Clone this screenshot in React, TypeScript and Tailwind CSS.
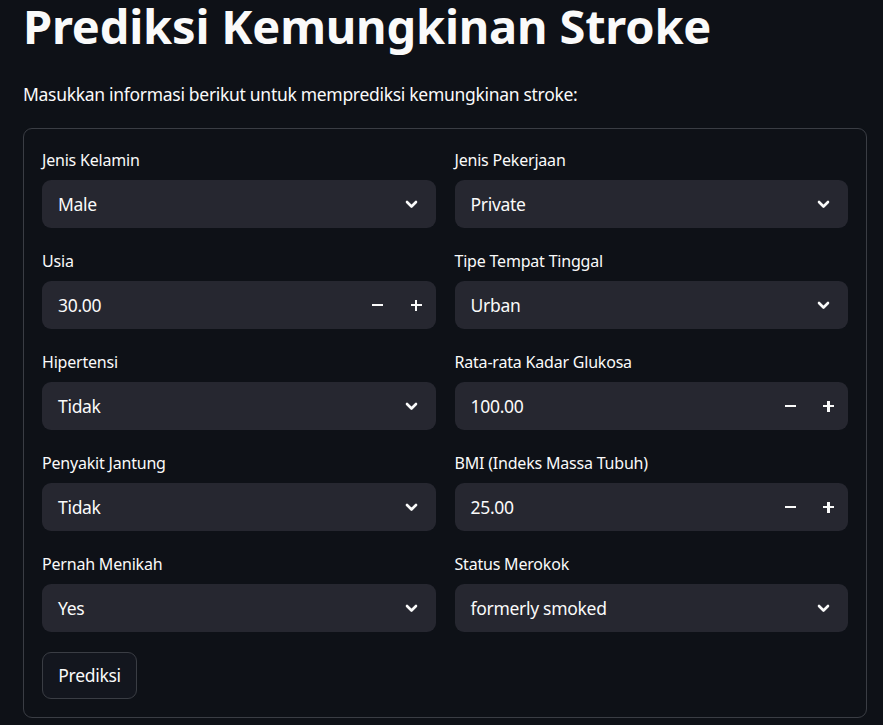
import React from "react";

const Chevron = () => (
  <svg width="13" height="9" viewBox="0 0 13 9" fill="none" stroke="#fafafa" strokeWidth="2.6" strokeLinecap="round" strokeLinejoin="round">
    <path d="M2 2l4.5 4.5L11 2" />
  </svg>
);

const Label = ({ children }: { children: React.ReactNode }) => (
  <div className="h-[19px] mb-[10px] text-[16px] leading-[19px] tracking-[-0.2px] text-[#fafafa]">{children}</div>
);

const Select = ({ label, value }: { label: string; value: string }) => (
  <div className="flex flex-col">
    <Label>{label}</Label>
    <div className="h-[48px] rounded-[9px] bg-[#262730] flex items-center justify-between pl-[16px] pr-[18px]">
      <span className="text-[17.5px] tracking-[-0.3px] text-[#fafafa]">{value}</span>
      <Chevron />
    </div>
  </div>
);

const NumberInput = ({ label, value }: { label: string; value: string }) => (
  <div className="flex flex-col">
    <Label>{label}</Label>
    <div className="h-[48px] rounded-[9px] bg-[#262730] flex items-center">
      <span className="flex-1 pl-[16px] text-[17.5px] tracking-[-0.3px] text-[#fafafa]">{value}</span>
      <div className="w-[38px] h-full flex items-center justify-center">
        <div className="w-[11px] h-[2.5px] bg-[#fafafa]" />
      </div>
      <div className="w-[39px] h-full flex items-center justify-center relative">
        <div className="w-[11px] h-[2.5px] bg-[#fafafa]" />
        <div className="absolute w-[2.5px] h-[11px] bg-[#fafafa]" />
      </div>
    </div>
  </div>
);

export default function App() {
  return (
    <div
      className="w-[883px] h-[725px] overflow-hidden bg-[#0e1117] text-[#fafafa] pl-[23px] pr-[16px]"
      style={{ fontFamily: "'Noto Sans', sans-serif" }}
    >
      <h1 className="text-[47px] font-bold leading-[52px] tracking-[-0.2px]">
        Prediksi Kemungkinan Stroke
      </h1>
      <p className="mt-[30px] text-[17.5px] leading-[24px] tracking-[-0.3px]">
        Masukkan informasi berikut untuk memprediksi kemungkinan stroke:
      </p>
      <div className="mt-[22px] border border-[#3a3d44] rounded-[9px] px-[18px] pt-[22px] pb-[18px]">
        <div className="grid grid-cols-2 gap-x-[19px] gap-y-[24px]">
          <Select label="Jenis Kelamin" value="Male" />
          <Select label="Jenis Pekerjaan" value="Private" />
          <NumberInput label="Usia" value="30.00" />
          <Select label="Tipe Tempat Tinggal" value="Urban" />
          <Select label="Hipertensi" value="Tidak" />
          <NumberInput label="Rata-rata Kadar Glukosa" value="100.00" />
          <Select label="Penyakit Jantung" value="Tidak" />
          <NumberInput label="BMI (Indeks Massa Tubuh)" value="25.00" />
          <Select label="Pernah Menikah" value="Yes" />
          <Select label="Status Merokok" value="formerly smoked" />
        </div>
        <button className="mt-[20px] h-[47px] w-[95px] rounded-[9px] border border-[#3a3d44] bg-[#13161e] text-[17.5px] tracking-[-0.3px] text-[#fafafa]">
          Prediksi
        </button>
      </div>
    </div>
  );
}
